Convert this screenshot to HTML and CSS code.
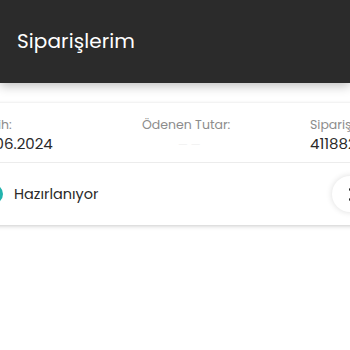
FILE: index.html
```html
<!DOCTYPE html>
<html lang="tr">
<head>
<meta charset="UTF-8" />
<meta name="viewport" content="width=device-width, initial-scale=1.0" />
<title>Siparişlerim</title>
<link rel="stylesheet" href="styles.css">
</head>
<body>

<header class="topbar">
  <h1 class="topbar-title">Siparişlerim</h1>
</header>

<main class="orders">
  <!-- single order card, wider than the screen -->
  <section class="order-card">
    <div class="order-info">
      <div class="info-col">
        <span class="info-label">Tarih:</span>
        <span class="info-value">12.06.2024</span>
      </div>
      <div class="info-col">
        <span class="info-label">Ödenen Tutar:</span>
        <span class="info-value faint">— —</span>
      </div>
      <div class="info-col">
        <span class="info-label">Sipariş No:</span>
        <span class="info-value">41188231</span>
      </div>
    </div>
    <div class="order-status">
      <span class="status-dot"></span>
      <span class="status-text">Hazırlanıyor</span>
      <button class="more-btn" aria-label="Detay">
        <span class="dots"><i></i><i></i></span>
      </button>
    </div>
  </section>
</main>

</body>
</html>
```

FILE: styles.css
```css
:root {
  --bar-dark: #2b2b2b;
  --text-dark: #2a2a2a;
  --text-muted: #8c8c8c;
  --teal: #22b3ad;
  --line: #ececec;
  --font-body: 'Poppins', 'Open Sans', 'Noto Sans', sans-serif;
}

body {
  margin: 0;
  font-family: var(--font-body);
  background: #fff;
  color: var(--text-dark);
}

.topbar {
  height: 83px;
  background: var(--bar-dark);
  display: flex;
  align-items: center;
  padding-left: 17px;
  box-shadow: 0 3px 10px rgba(0,0,0,0.25);
  position: relative;
  z-index: 1;
}

.topbar-title {
  margin: 0 0 2px;
  font-size: 20px;
  font-weight: 400;
  color: #fff;
  letter-spacing: 0.1px;
}

.orders {
  padding: 20px 0 12px;
  overflow: hidden;
}

.order-card {
  margin-left: -38px;
  width: 520px;
  background: #fff;
  box-shadow: 0 0 3px rgba(0,0,0,0.1), 0 2px 4px rgba(0,0,0,0.12);
}

.order-info {
  display: grid;
  grid-template-columns: 164px 168px auto;
  padding: 13px 16px 8px;
  border-bottom: 1px solid var(--line);
}

.info-col {
  display: flex;
  flex-direction: column;
}

.info-label {
  font-size: 12.5px;
  line-height: 18px;
  color: var(--text-muted);
}

.info-value {
  font-size: 15px;
  line-height: 20px;
  color: var(--text-dark);
}

.info-value.faint { color: #f3f3f3; padding-left: 36px; font-size: 11px; }

.order-status {
  display: flex;
  align-items: center;
  height: 62px;
  padding-left: 21px;
  padding-right: 114px;
}

.status-dot {
  width: 20px;
  height: 20px;
  border-radius: 50%;
  background: var(--teal);
}

.status-text {
  margin-left: 11px;
  font-size: 14.5px;
  color: var(--text-dark);
}

.more-btn {
  margin-left: auto;
  width: 36px;
  height: 36px;
  border-radius: 50%;
  border: none;
  background: #fff;
  box-shadow: 0 0 6px rgba(0,0,0,0.14);
  display: flex;
  align-items: center;
  justify-content: center;
  padding: 0;
}

.dots {
  display: flex;
  flex-direction: column;
  gap: 7px;
}

.dots i {
  width: 3px;
  height: 3px;
  border-radius: 50%;
  background: #222;
}
```
